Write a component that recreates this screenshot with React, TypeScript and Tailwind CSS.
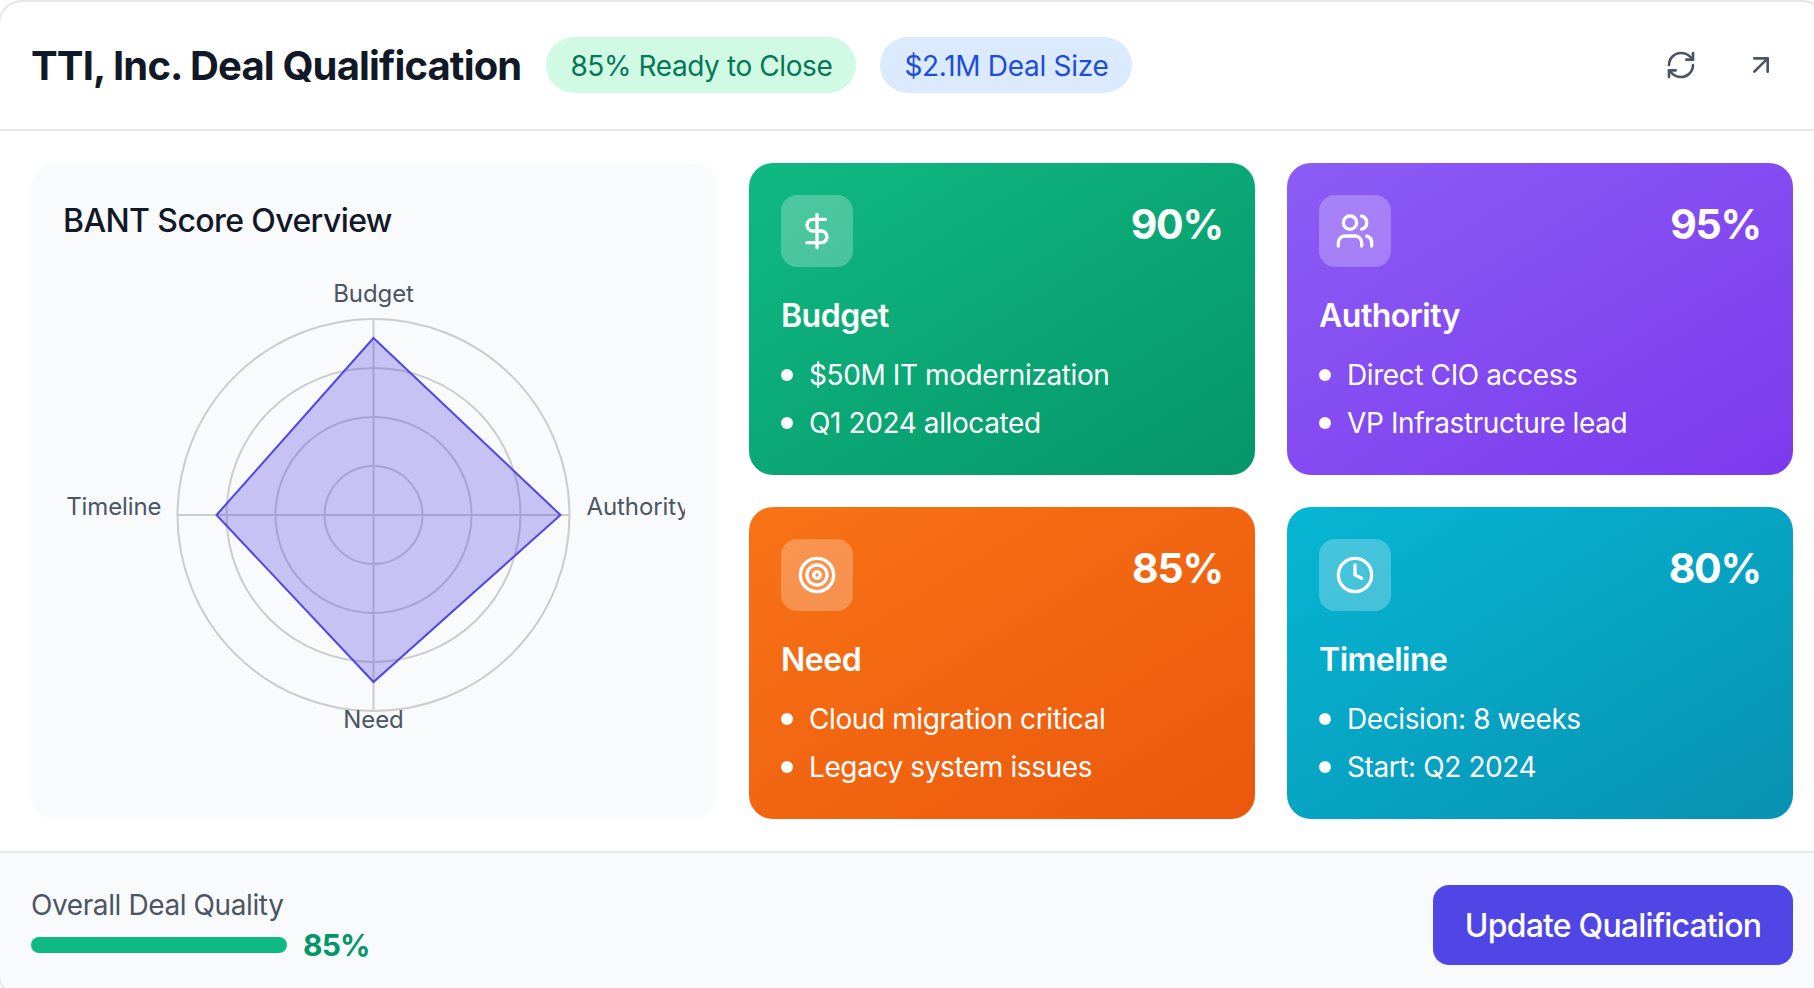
import { DollarSign, Users, Target, Clock, RefreshCw, ArrowUpRight } from "lucide-react";

const cards = [
  { t: "Budget", p: "90%", I: DollarSign, a: "$50M IT modernization", b: "Q1 2024 allocated", c: "from-[#10b981] to-[#059669]" },
  { t: "Authority", p: "95%", I: Users, a: "Direct CIO access", b: "VP Infrastructure lead", c: "from-[#8b5cf6] to-[#7c3aed]" },
  { t: "Need", p: "85%", I: Target, a: "Cloud migration critical", b: "Legacy system issues", c: "from-[#f97316] to-[#ea580c]" },
  { t: "Timeline", p: "80%", I: Clock, a: "Decision: 8 weeks", b: "Start: Q2 2024", c: "from-[#06b6d4] to-[#0891b2]" },
];

function Radar() {
  const cx = 310.5;
  const cy = 250;
  const R = 196;
  return (
    <svg width="622" height="500" viewBox="0 0 622 500" className="block overflow-hidden">
      {[49, 98, 147, 196].map((r) => (
        <circle key={r} cx={cx} cy={cy} r={r} fill="none" stroke="#ccc" strokeWidth="2" />
      ))}
      <line x1={cx} y1={cy - R} x2={cx} y2={cy + R} stroke="#ccc" strokeWidth="2" />
      <line x1={cx - R} y1={cy} x2={cx + R} y2={cy} stroke="#ccc" strokeWidth="2" />
      <polygon
        points={`${cx},${cy - 177} ${cx + 187},${cy} ${cx},${cy + 167} ${cx - 157},${cy}`}
        fill="#4f46e5"
        fillOpacity="0.3"
        stroke="#4f46e5"
        strokeWidth="2"
      />
      <g fill="#4b5563" fontSize="24" letterSpacing="-0.1">
        <text x={cx} y={37} textAnchor="middle">Budget</text>
        <text x={cx} y={463} textAnchor="middle">Need</text>
        <text x={cx - 212} y={250} textAnchor="end">Timeline</text>
        <text x={cx + 213} y={250} textAnchor="start">Authority</text>
      </g>
    </svg>
  );
}

export default function App() {
  return (
    <div className="w-[1814px] h-[988px] bg-white overflow-hidden">
      <div className="-ml-[2px] w-[1828px] h-[998px] flex flex-col border-2 border-[#e5e7eb] rounded-[24px] overflow-hidden text-[#111827] font-['Inter',sans-serif]">
        <header className="h-[129px] shrink-0 border-b-2 border-[#e5e7eb] flex items-center justify-between pl-[31px] pr-[31px] pb-px">
          <div className="flex items-center gap-6">
            <h1 className="text-[40px] leading-[56px] pt-[2px] mr-px font-bold tracking-[-0.85px]">TTI, Inc. Deal Qualification</h1>
            <span className="h-14 flex items-center px-6 pt-[2px] rounded-full bg-[#d1fae5] text-[#047857] text-[28px] tracking-[-0.4px]">85% Ready to Close</span>
            <span className="h-14 flex items-center px-6 pt-[2px] rounded-full bg-[#dbeafe] text-[#1d4ed8] text-[28px] tracking-[-0.3px]">$2.1M Deal Size</span>
          </div>
          <div className="flex items-center gap-4">
            <button className="p-4 text-[#4b5563]"><RefreshCw size={32} /></button>
            <button className="p-4 text-[#4b5563]"><ArrowUpRight size={32} /></button>
          </div>
        </header>
        <main className="h-[720px] shrink-0 flex gap-8 pl-[31px] pr-[31px] py-8">
          <section className="w-[686px] shrink-0 rounded-[24px] bg-[#f9fafb] pt-[33px] pl-8">
            <h2 className="text-[32px] leading-[50px] font-medium tracking-[-0.6px]">BANT Score Overview</h2>
            <div className="mt-[19px]"><Radar /></div>
          </section>
          <div className="flex-1 grid grid-cols-2 grid-rows-2 gap-8">
            {cards.map(({ t, p, I, a, b, c }) => (
              <div key={t} className={`rounded-[24px] p-8 text-white bg-linear-to-br/srgb ${c}`}>
                <div className="flex items-start justify-between">
                  <div className="w-[72px] h-[72px] rounded-2xl bg-white/25 flex items-center justify-center"><I size={40} /></div>
                  <div className="text-[41px] leading-[58px] font-bold tracking-[-1.2px]">{p}</div>
                </div>
                <div className="mt-[25px] text-[32px] leading-[48px] font-semibold tracking-[-0.5px]">{t}</div>
                <ul className="mt-[15px] flex flex-col gap-2 text-[28px] tracking-[-0.4px]">
                  {[a, b].map((x) => (
                    <li key={x} className="flex items-center gap-4 leading-[40px]">
                      <span className="w-3 h-3 rounded-full bg-white shrink-0" />
                      {x}
                    </li>
                  ))}
                </ul>
              </div>
            ))}
          </div>
        </main>
        <footer className="flex-1 border-t-2 border-[#e5e7eb] bg-[#f9fafb] flex items-start justify-between pl-[31px] pr-[31px] pt-8">
          <div>
            <div className="text-[28px] leading-[40px] text-[#4b5563] tracking-[-0.4px]">Overall Deal Quality</div>
            <div className="flex items-center gap-4">
              <div className="w-[256px] h-4 rounded-full bg-[#10b981]" />
              <span className="text-[30px] leading-[40px] font-bold text-[#059669] tracking-[-0.9px]">85%</span>
            </div>
          </div>
          <button className="w-[360px] h-20 pt-[2px] rounded-2xl bg-[#4f46e5] text-white text-[32px] font-medium tracking-[-0.8px]">Update Qualification</button>
        </footer>
      </div>
    </div>
  );
}
